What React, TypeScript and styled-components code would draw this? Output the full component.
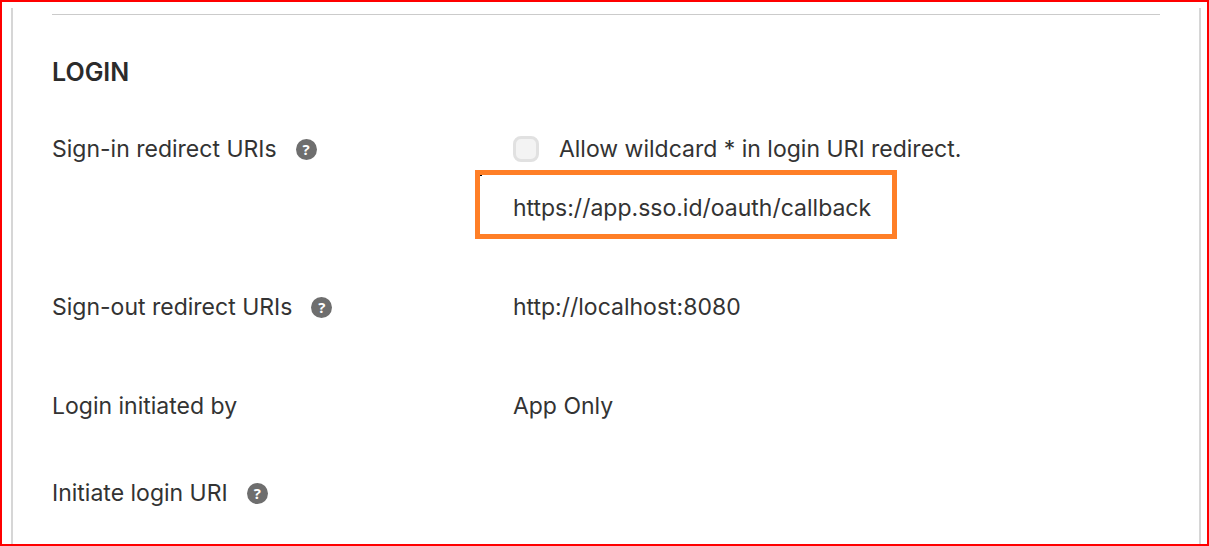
import React from "react";
import styled, { createGlobalStyle } from "styled-components";

const GlobalStyle = createGlobalStyle`
  *, *::before, *::after { box-sizing: border-box; }
  body {
    margin: 0;
    background: #fff;
    color: #333;
    font-family: Inter, "Liberation Sans", sans-serif;
    font-size: 23px;
    line-height: 28px;
  }
`;

const Frame = styled.main`
  display: flex;
  min-height: 100vh;
  padding: 6px 6px 0 9px;
  border: 2px solid #ff0000;
`;

const Panel = styled.section`
  flex: 1;
  min-width: 0;
  padding: 6px 39px 37px;
  border: solid #d6d6d6;
  border-width: 0 2px;
`;

const Divider = styled.hr`
  height: 1px;
  margin: 0;
  border: 0;
  background: #cbcbcb;
`;

const Heading = styled.h2`
  margin: 43px 0 49px;
  color: #2b2b2b;
  font-size: 25px;
  font-weight: 600;
  line-height: 28px;
`;

const Settings = styled.dl`
  margin: 0;
`;

const Row = styled.div<{ $gap?: number }>`
  display: grid;
  grid-template-columns: 41.6% minmax(0, 1fr);
  margin-bottom: ${({ $gap = 0 }) => $gap}px;
`;

const Name = styled.dt`
  display: flex;
  align-items: center;
  align-self: start;
  gap: 19px;
`;

const Value = styled.dd`
  margin: 0;
`;

const HelpButton = styled.button`
  display: flex;
  align-items: center;
  justify-content: center;
  width: 21px;
  height: 21px;
  padding: 0;
  border: 0;
  border-radius: 50%;
  background: #6e6e6e;
  color: #fff;
  font: 700 15px/20px "Open Sans", sans-serif;
`;

const CheckLabel = styled.label`
  display: flex;
  align-items: center;
  gap: 20px;
`;

const Checkbox = styled.input`
  appearance: none;
  flex: none;
  width: 26px;
  height: 26px;
  margin: 0;
  border: 3px solid #e1e1e1;
  border-radius: 8px;
  background: #f3f3f3;
`;

const Highlight = styled.div`
  position: relative;
  width: fit-content;
  margin: 7px 0 0 -38px;
  padding: 19px 21px 12px 33px;
  border: 5px solid #ff7f27;

  &::before {
    content: "";
    position: absolute;
    top: 0;
    left: 0;
    width: 2px;
    height: 1px;
    background: #000;
  }
`;

function Help({ topic }: { topic: string }) {
  return (
    <HelpButton type="button" aria-label={`Help: ${topic}`}>
      ?
    </HelpButton>
  );
}

interface SettingProps {
  name: string;
  help?: boolean;
  gap?: number;
  children?: React.ReactNode;
}

function Setting({ name, help, gap, children }: SettingProps) {
  return (
    <Row $gap={gap}>
      <Name>
        {name}
        {help && <Help topic={name} />}
      </Name>
      <Value>{children}</Value>
    </Row>
  );
}

export default function App() {
  return (
    <>
      <GlobalStyle />
      <Frame>
        <Panel>
          <Divider />
          <Heading>LOGIN</Heading>
          <Settings>
            <Setting name="Sign-in redirect URIs" help gap={54}>
              <CheckLabel htmlFor="wildcard">
                <Checkbox id="wildcard" type="checkbox" />
                Allow wildcard * in login URI redirect.
              </CheckLabel>
              <Highlight>https://app.sso.id/oauth/callback</Highlight>
            </Setting>
            <Setting name="Sign-out redirect URIs" help gap={71}>
              http://localhost:8080
            </Setting>
            <Setting name="Login initiated by" gap={59}>
              App Only
            </Setting>
            <Setting name="Initiate login URI" help />
          </Settings>
        </Panel>
      </Frame>
    </>
  );
}
